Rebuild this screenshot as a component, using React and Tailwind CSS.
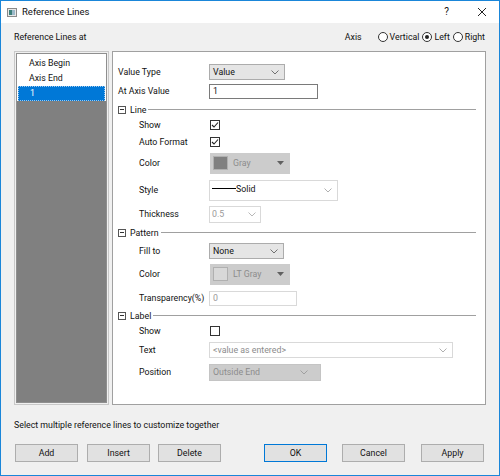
import React from 'react'

const font = { fontFamily: 'Roboto, "Liberation Sans", sans-serif' }

const Chevron = ({ color = '#707070' }) => (
    <svg width="8" height="5" viewBox="0 0 8 5" className="shrink-0">
        <path d="M0.5 0.5 L4 4 L7.5 0.5" fill="none" stroke={color} strokeWidth="1" />
    </svg>
)

const Tri = () => (
    <svg width="7" height="4" viewBox="0 0 7 4" className="shrink-0">
        <path d="M0 0 L7 0 L3.5 4 Z" fill="#606060" />
    </svg>
)

const Check = ({ checked }) => (
    <div className="w-[10px] h-[10px] border border-[#333] bg-white flex items-center justify-center">
        {checked && (
            <svg width="8" height="8" viewBox="0 0 8 8">
                <path d="M1 4 L3 6 L7 1.5" fill="none" stroke="#222" strokeWidth="1.1" />
            </svg>
        )}
    </div>
)

const Radio = ({ on }) => (
    <div className="w-[10px] h-[10px] rounded-full border border-[#333] bg-white flex items-center justify-center">
        {on && <div className="w-[4px] h-[4px] rounded-full bg-[#222]" />}
    </div>
)

const Section = ({ label }) => (
    <div className="flex items-center pl-[5px] pr-[9px]">
        <div className="w-[8px] h-[8px] border border-[#555] flex items-center justify-center bg-white">
            <div className="w-[4px] h-px bg-[#333]" />
        </div>
        <span className="ml-[4px] mr-[2px]">{label}</span>
        <div className="flex-1 h-px bg-[#a0a0a0]" />
    </div>
)

const Row = ({ h, label, indent, children }) => (
    <div className={`flex items-center ${h}`}>
        <div className={indent ? 'w-[96px] pl-[26px] shrink-0' : 'w-[96px] pl-[5px] shrink-0'}>{label}</div>
        {children}
    </div>
)

const ColorBox = ({ swatch, name }) => (
    <div className="w-[80px] h-[21px] bg-[#cccccc] flex items-center pl-[3px] pr-[6px] ml-px">
        <div className="w-[15px] h-[14px] border border-[#b0b0b0]" style={{ background: swatch }} />
        <span className="ml-[5px] flex-1 text-[#8c8c8c]">{name}</span>
        <Tri />
    </div>
)

const Btn = ({ children, primary }) => (
    <div className={`w-[63px] h-[18px] flex items-center justify-center bg-[#e1e1e1] border ${primary ? 'border-[#0078d7]' : 'border-[#adadad]'}`}>
        {children}
    </div>
)

export default function App() {
    return (
        <div style={font} className="w-[500px] h-[476px] border border-[#1a86d9] bg-[#f0f0f0] flex flex-col text-[8.8px] text-[#111] leading-none overflow-hidden">
            {/* title bar */}
            <div className="h-[22px] bg-white flex items-center shrink-0">
                <svg width="10" height="9" viewBox="0 0 10 9" className="ml-[6px]">
                    <rect x="0.5" y="0.5" width="9" height="8" fill="#e8e8e8" stroke="#8a8a8a" />
                    <rect x="2" y="2" width="3" height="5" fill="#3d7f7a" />
                    <rect x="5" y="2" width="3" height="5" fill="#9bb9c9" />
                </svg>
                <span className="ml-[5px] text-[9.5px]">Reference Lines</span>
                <span className="ml-auto text-[10px] mr-[28px]">?</span>
                <svg width="10" height="10" viewBox="0 0 10 10" className="mr-[12px]">
                    <path d="M1 1 L9 9 M9 1 L1 9" stroke="#222" strokeWidth="1" />
                </svg>
            </div>

            <div className="flex-1 flex flex-col px-[13px]">
                {/* header row */}
                <div className="h-[27px] flex items-center pt-px">
                    <span>Reference Lines at</span>
                    <span className="ml-auto mr-[16px]">Axis</span>
                    <Radio />
                    <span className="ml-[2px]">Vertical</span>
                    <div className="ml-[3px]"><Radio on /></div>
                    <span className="ml-[2px]">Left</span>
                    <div className="ml-[3px]"><Radio /></div>
                    <span className="ml-[2px] mr-[1px]">Right</span>
                </div>

                {/* panels */}
                <div className="h-[354px] flex gap-[3px] mt-px">
                    <div className="w-[95px] border border-[#c8c8c8] p-px">
                        <div className="w-full h-full border border-[#8f8f8f] bg-white flex flex-col">
                            <div className="h-[2px]" />
                            <div className="h-[15px] flex items-center pl-[12px]">Axis Begin</div>
                            <div className="h-[15px] flex items-center pl-[12px]">Axis End</div>
                            <div className="h-[15px] mx-px flex items-center pl-[11px] bg-[#0078d7] text-white border border-dotted border-[#9cc8ee]">1</div>
                            <div className="flex-1 bg-[#808080]" />
                        </div>
                    </div>

                    <div className="flex-1 bg-white border border-[#a0a0a0] flex flex-col pt-[11px]">
                        <Row h="h-[18px]" label="Value Type">
                            <div className="w-[76px] h-[16px] bg-[#e5e5e5] border border-[#acacac] flex items-center pl-[3px] pr-[5px]">
                                <span className="flex-1">Value</span>
                                <Chevron />
                            </div>
                        </Row>
                        <Row h="h-[20px]" label="At Axis Value">
                            <div className="w-[109px] h-[15px] border border-[#7a7a7a] flex items-center pl-[3px]">1</div>
                        </Row>
                        <div className="h-[18px] flex flex-col justify-center"><Section label="Line" /></div>
                        <Row h="h-[12px]" label="Show" indent><div className="ml-px"><Check checked /></div></Row>
                        <Row h="h-[22px]" label="Auto Format" indent><div className="ml-px"><Check checked /></div></Row>
                        <Row h="h-[20px]" label="Color" indent><ColorBox swatch="#808080" name="Gray" /></Row>
                        <Row h="h-[34px]" label="Style" indent>
                            <div className="w-[129px] h-[21px] border border-[#d9d9d9] flex items-start pt-[4px] pl-[2px] pr-[5px]">
                                <div className="w-[24px] h-px bg-black mt-[3px]" />
                                <span className="flex-1">Solid</span>
                                <div className="self-center mt-[-3px]"><Chevron color="#b0b0b0" /></div>
                            </div>
                        </Row>
                        <Row h="h-[14px]" label="Thickness" indent>
                            <div className="w-[52px] h-[17px] border border-[#d9d9d9] flex items-center pl-[2px] pr-[4px] text-[#9a9a9a]">
                                <span className="flex-1">0.5</span>
                                <Chevron color="#b8b8b8" />
                            </div>
                        </Row>
                        <div className="h-[24px] flex flex-col justify-center"><Section label="Pattern" /></div>
                        <Row h="h-[12px]" label="Fill to" indent>
                            <div className="w-[75px] h-[16px] bg-[#e5e5e5] border border-[#acacac] flex items-center pl-[3px] pr-[5px]">
                                <span className="flex-1">None</span>
                                <Chevron />
                            </div>
                        </Row>
                        <Row h="h-[34px]" label="Color" indent><ColorBox swatch="#d8d8d8" name="LT Gray" /></Row>
                        <Row h="h-[14px]" label="Transparency(%)" indent>
                            <div className="w-[88px] h-[15px] border border-[#d9d9d9] flex items-center pl-[3px] text-[#9a9a9a]">0</div>
                        </Row>
                        <div className="h-[22px] flex flex-col justify-center"><Section label="Label" /></div>
                        <Row h="h-[8px]" label="Show" indent><div className="ml-px"><Check /></div></Row>
                        <Row h="h-[30px]" label="Text" indent>
                            <div className="w-[244px] h-[16px] border border-[#d9d9d9] flex items-center pl-[3px] pr-[5px] text-[#8c8c8c]">
                                <span className="flex-1">&lt;value as entered&gt;</span>
                                <Chevron color="#b0b0b0" />
                            </div>
                        </Row>
                        <Row h="h-[14px]" label="Position" indent>
                            <div className="w-[112px] h-[17px] bg-[#cccccc] border border-[#c4c4c4] flex items-center pl-[3px] pr-[12px] text-[#8c8c8c]">
                                <span className="flex-1">Outside End</span>
                                <Chevron color="#a0a0a0" />
                            </div>
                        </Row>
                    </div>
                </div>

                <div className="h-[39px] flex items-center pt-[1px]">Select multiple reference lines to customize together</div>

                <div className="flex items-center pl-px">
                    <Btn>Add</Btn>
                    <div className="ml-[9px]"><Btn>Insert</Btn></div>
                    <div className="ml-[8px]"><Btn>Delete</Btn></div>
                    <div className="ml-[43px]"><Btn primary>OK</Btn></div>
                    <div className="ml-[15px]"><Btn>Cancel</Btn></div>
                    <div className="ml-[16px]"><Btn>Apply</Btn></div>
                </div>
            </div>
        </div>
    )
}
